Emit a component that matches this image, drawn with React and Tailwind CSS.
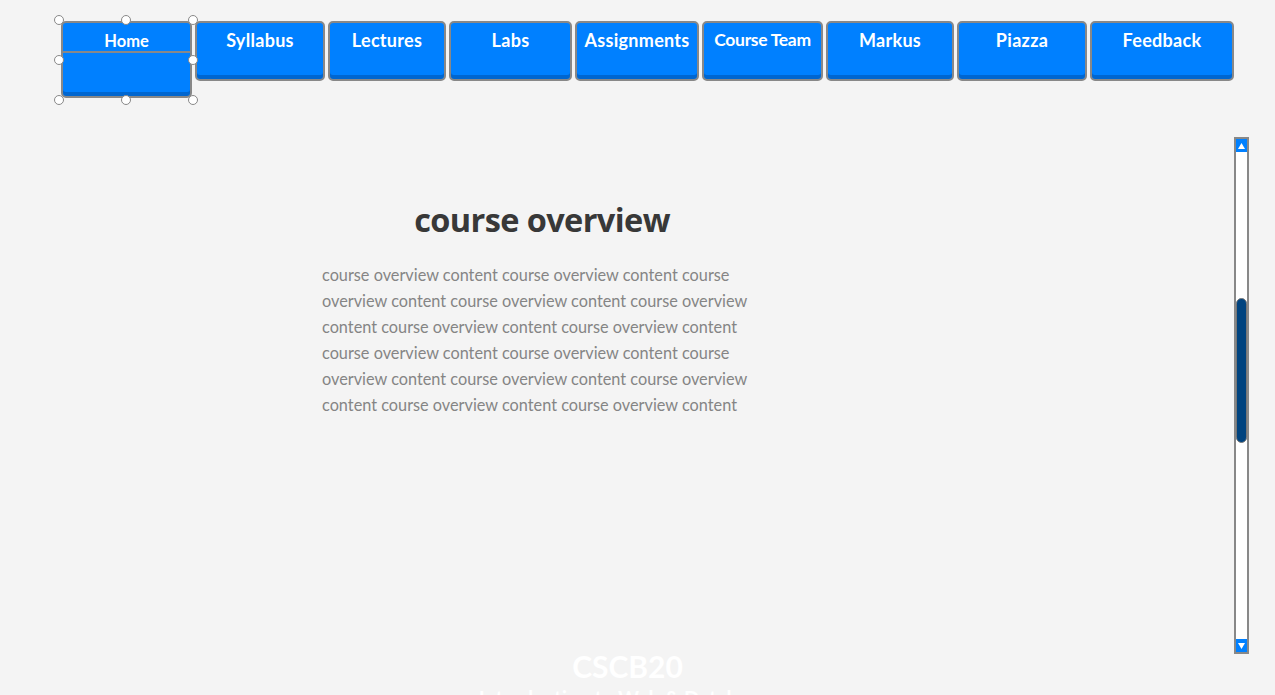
import React from "react";

const tabs = [
  { label: "Syllabus", w: "w-[130px]" },
  { label: "Lectures", w: "w-[118px]" },
  { label: "Labs", w: "w-[123px]" },
  { label: "Assignments", w: "w-[124px]" },
  { label: "Course Team", w: "w-[121px]", small: true },
  { label: "Markus", w: "w-[128px]" },
  { label: "Piazza", w: "w-[130px]" },
  { label: "Feedback", w: "w-[144px]" },
];

const handles = [
  "left-[-7px] top-[-6px]",
  "left-[60px] top-[-6px]",
  "left-[127px] top-[-6px]",
  "left-[-7px] top-[34px]",
  "left-[127px] top-[34px]",
  "left-[-7px] top-[74px]",
  "left-[60px] top-[74px]",
  "left-[127px] top-[74px]",
];

const text = Array(14).fill("course overview content").join(" ");

export default function App() {
  return (
    <div
      className="h-[695px] overflow-hidden bg-[#f4f4f4]"
      style={{ fontFamily: "Lato, 'Open Sans', sans-serif" }}
    >
      {/* Nav */}
      <nav className="flex items-start gap-[3px] pl-[61px] pt-[21px]">
        <div className="relative">
          <button className="flex h-[77px] w-[131px] flex-col rounded-[5px] border-2 border-[#888] bg-[#0080ff] shadow-[inset_0_-4px_0_#0066d0]">
            <span className="block w-full border-b-2 border-[#888] pt-[8px] text-center text-[16.5px] font-bold leading-[20px] text-white">
              Home
            </span>
          </button>
          {handles.map((h) => (
            <span
              key={h}
              className={`absolute ${h} h-[10px] w-[10px] rounded-full border border-[#888] bg-white`}
            />
          ))}
        </div>
        {tabs.map((t) => (
          <button
            key={t.label}
            className={`${t.w} h-[60px] rounded-[5px] border-2 border-[#888] bg-[#0080ff] shadow-[inset_0_-4px_0_#0066d0] flex flex-col items-center`}
          >
            <span
              className={`block whitespace-nowrap pt-[6px] font-bold leading-[22px] text-white ${
                t.small ? "text-[17.5px] tracking-[-0.3px]" : "text-[18px] tracking-[0.3px]"
              }`}
            >
              {t.label}
            </span>
          </button>
        ))}
      </nav>

      {/* Main */}
      <div className="mt-[39px] flex">
        <main className="ml-[322px] w-[440px]">
          <h1
            className="mt-[63px] text-center text-[32.5px] font-bold leading-[40px] text-[#383838]"
            style={{ fontFamily: "'Open Sans', sans-serif", letterSpacing: "-0.6px" }}
          >
            course overview
          </h1>
          <p className="mt-[22px] text-[16.3px] leading-[26px] text-[#858585]">{text}</p>
        </main>

        {/* Scrollbar */}
        <div className="ml-auto mr-[26px] flex h-[517px] w-[15px] flex-col border-2 border-[#888] bg-white">
          <div className="flex h-[13px] w-full items-center justify-center bg-[#0080ff]">
            <svg width="7" height="6" viewBox="0 0 7 6">
              <path d="M3.5 0 L7 6 L0 6 Z" fill="white" />
            </svg>
          </div>
          <div className="flex-1">
            <div className="mt-[146px] h-[145px] w-full rounded-full border border-[#777] bg-[#00437f]" />
          </div>
          <div className="flex h-[13px] w-full items-center justify-center bg-[#0080ff]">
            <svg width="7" height="6" viewBox="0 0 7 6">
              <path d="M0 0 L7 0 L3.5 6 Z" fill="white" />
            </svg>
          </div>
        </div>
      </div>

      {/* Footer */}
      <footer className="-mt-[6px] text-center text-white">
        <div className="pr-[20px] text-[30px] font-bold leading-[36px]">CSCB20</div>
        <div className="pr-[20px] text-[20px] font-bold leading-[28px]">
          Introduction to Web &amp; Databases
        </div>
      </footer>
    </div>
  );
}
